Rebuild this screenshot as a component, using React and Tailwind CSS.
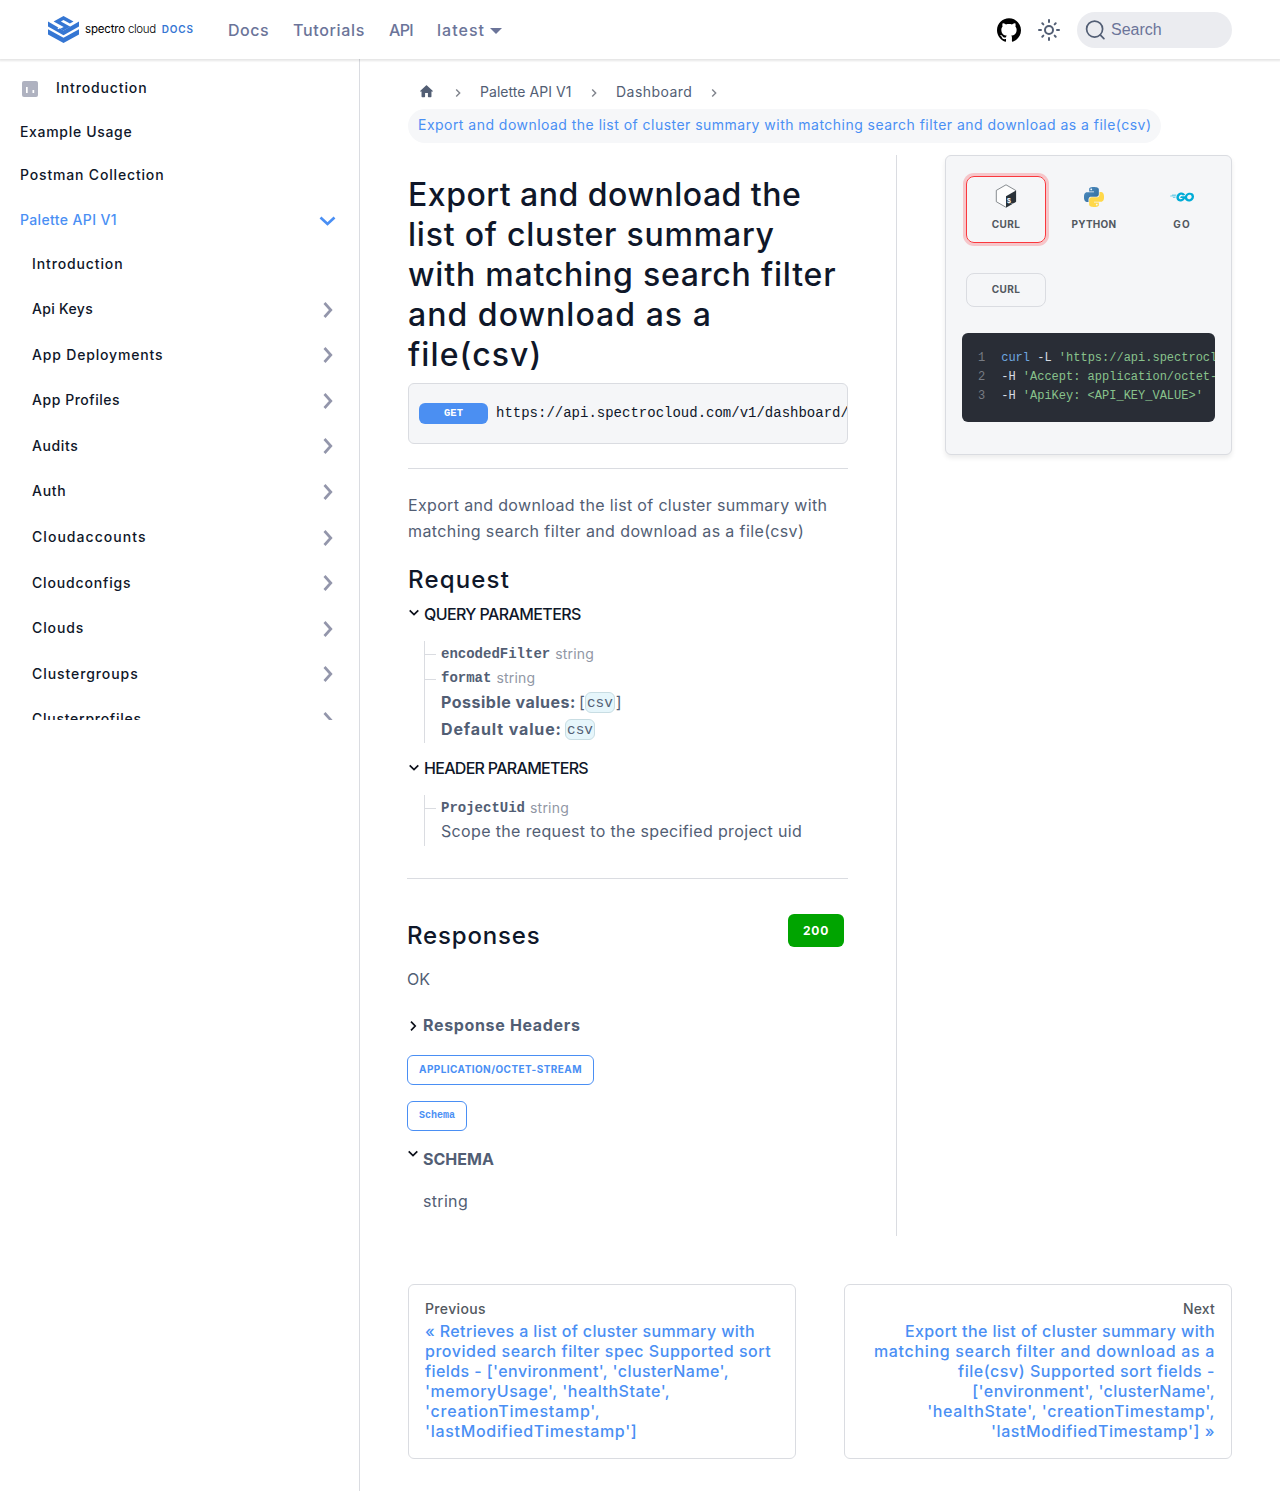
import React from "react";
import { SiGithub, SiGo } from "react-icons/si";

const sidebarTop = [
  { label: "Example Usage", ls: "tracking-[0.68px]" },
  { label: "Postman Collection", ls: "tracking-[0.83px]" },
];

const sidebarGroups = [
  { label: "Api Keys", ls: "tracking-[0.32px]" },
  { label: "App Deployments", ls: "tracking-[0.82px]" },
  { label: "App Profiles", ls: "tracking-[0.54px]" },
  { label: "Audits", ls: "tracking-[0.6px]" },
  { label: "Auth", ls: "tracking-[0.7px]" },
  { label: "Cloudaccounts", ls: "tracking-[1.05px]" },
  { label: "Cloudconfigs", ls: "tracking-[0.84px]" },
  { label: "Clouds", ls: "tracking-[0.9px]" },
  { label: "Clustergroups", ls: "tracking-[0.92px]" },
  { label: "Clusterprofiles", ls: "tracking-[0.74px]" },
];

const previousLines = [
  ["« Retrieves a list of cluster summary with", "tracking-[0.38px]"],
  ["provided search filter spec Supported sort", "tracking-[0.53px]"],
  ["fields - ['environment', 'clusterName',", "tracking-[0.42px]"],
  ["'memoryUsage', 'healthState',", "tracking-[0.53px]"],
  ["'creationTimestamp',", "tracking-[0.78px]"],
  ["'lastModifiedTimestamp']", "tracking-[0.69px]"],
];

const nextLines = [
  ["Export the list of cluster summary with", "tracking-[0.41px]"],
  ["matching search filter and download as a", "tracking-[0.67px]"],
  ["file(csv) Supported sort fields -", "tracking-[0.53px]"],
  ["['environment', 'clusterName',", "tracking-[0.44px]"],
  ["'healthState', 'creationTimestamp',", "tracking-[0.67px]"],
  ["'lastModifiedTimestamp'] »", "tracking-[0.54px]"],
];

function Logo() {
  return (
    <svg width="31" height="27" viewBox="0 0 31 27" fill="#3576d3">
      <path d="M0 5.400L15.500 14.400L31 5.400V10.600L15.500 19.200L0 10.600Z" />
      <path d="M0 13.200L15.500 21.800L31 13.200V18.500L15.500 27L0 18.500Z" />
      <path d="M3.200 5.600L12.500 11L9.800 12.600" fill="none" stroke="#fff" strokeWidth="1.300" />
      <path d="M15.500 0L25.500 5.500L21.900 7.500L15.500 4L12.900 5.500L22.400 10.700L15.500 14.600L12.200 12.800L15.700 10.900L5.600 5.400Z" />
    </svg>
  );
}

function Sun() {
  return (
    <svg width="24" height="24" viewBox="0 0 24 24" fill="none" stroke="#525e74" strokeWidth="2" strokeLinecap="round">
      <circle cx="12" cy="12" r="4" />
      <path d="M12 2v2M12 20v2M2 12h2M20 12h2M5.3 5.3l1.05 1.05M17.65 17.65l1.05 1.05M5.3 18.7l1.05-1.05M17.65 6.35l1.05-1.05" />
    </svg>
  );
}

function RightChevron() {
  return (
    <svg className="mt-px" width="20" height="20" viewBox="0 0 20 20" fill="none" stroke="#9396ab" strokeWidth="2.7">
      <path d="M7.500 3l6.300 7-6.300 7" />
    </svg>
  );
}

function Crumb() {
  return (
    <svg className="mt-0.5" width="8" height="10" viewBox="0 0 8 10" fill="none" stroke="#7f838c" strokeWidth="1.4">
      <path d="M2.200 1.400l3.500 3.600L2.200 8.600" />
    </svg>
  );
}

function Caret({ open }) {
  return open ? (
    <svg width="12" height="12" viewBox="0 0 12 12" fill="none" stroke="#0b0f19" strokeWidth="1.7">
      <path d="M1.700 3.400L6 7.600l4.300-4.200" />
    </svg>
  ) : (
    <svg width="12" height="12" viewBox="0 0 12 12" fill="none" stroke="#0b0f19" strokeWidth="1.7">
      <path d="M4 1.700L8.200 6 4 10.300" />
    </svg>
  );
}

function Bash() {
  return (
    <svg width="22" height="24" viewBox="0 0 22 24">
      <path d="M11 .8l9.700 5.600v11.300L11 23.300 1.300 17.700V6.400z" fill="#fdfdfd" stroke="#6a7075" strokeWidth=".8" />
      <path d="M11 12.200L21 6.400V17.800L11 23.600z" fill="#293138" />
      <text x="11.900" y="19" fontSize="7" fontWeight="700" fill="#fff" fontFamily="Liberation Sans, sans-serif">$_</text>
    </svg>
  );
}

const snake =
  "M14.25.18l.9.2.73.26.59.3.45.32.34.34.25.34.16.33.1.3.04.26.02.2-.01.13V8.5l-.05.63-.13.55-.21.46-.26.38-.3.31-.33.25-.35.19-.35.14-.33.1-.3.07-.26.04-.21.02H8.77l-.69.05-.59.14-.5.22-.41.27-.33.32-.27.35-.2.36-.15.37-.1.35-.07.32-.04.27-.02.21v3.06H3.17l-.21-.03-.28-.07-.32-.12-.35-.18-.36-.26-.36-.36-.35-.46-.32-.59-.28-.73-.21-.88-.14-1.05-.05-1.23.06-1.22.16-1.04.24-.87.32-.71.36-.57.4-.44.42-.33.42-.24.4-.16.36-.1.32-.05.24-.01h.16l.06.01h8.16v-.83H6.18l-.01-2.75-.02-.37.05-.34.11-.31.17-.28.25-.26.31-.23.38-.2.44-.18.51-.15.58-.12.64-.1.71-.06.77-.04.84-.02 1.27.05zm-6.3 1.98l-.23.33-.08.41.08.41.23.34.33.22.41.09.41-.09.33-.22.23-.34.08-.41-.08-.41-.23-.33-.33-.22-.41-.09-.41.09z";

function Python() {
  return (
    <svg width="20" height="20" viewBox="0 0 24 24">
      <defs>
        <linearGradient id="pyBlue" x1="0" y1="0" x2="1" y2="1">
          <stop offset="0" stopColor="#4f8fc4" />
          <stop offset="1" stopColor="#306998" />
        </linearGradient>
      </defs>
      <path d={snake} fill="url(#pyBlue)" />
      <path d={snake} fill="#ffd84a" transform="rotate(180 12 12)" />
    </svg>
  );
}

function Header() {
  return (
    <header className="relative z-10 flex h-[59px] items-center bg-white px-12 shadow-[0_1px_2px_1px_rgba(0,0,0,0.1)]">
      <a className="flex w-[180px] items-center">
        <Logo />
        <span className="-mt-[2px] ml-[6px] flex items-center text-[11.5px] leading-4 text-black">
          <span className="tracking-[-0.18px]">spectro</span>
          <span className="ml-[3px] font-light tracking-[-0.35px]">cloud</span>
          <span className="ml-[6px] text-[10px] font-semibold tracking-[0.8px] text-[#3576d3]">DOCS</span>
        </span>
      </a>
      <nav className="flex items-center font-medium text-[#6b7499]">
        <a className="w-[65px] tracking-[0.48px]">Docs</a>
        <a className="w-[96px] tracking-[0.67px]">Tutorials</a>
        <a className="w-[48px] tracking-[-0.66px]">API</a>
        <a className="flex items-center tracking-[1.02px]">
          latest
          <span className="ml-[5px] mt-[2px] border-x-[6px] border-t-[6px] border-x-transparent border-t-[#6b7499]" />
        </a>
      </nav>
      <div className="ml-auto flex items-center">
        <SiGithub size={24} color="#000" />
        <span className="ml-4 mr-4">
          <Sun />
        </span>
        <button className="flex h-9 w-[155px] items-center rounded-full bg-[#ebecf0] pl-2 font-['Liberation_Sans',sans-serif] text-base text-[#6b7499]">
          <svg width="20" height="20" viewBox="0 0 20 20" fill="none" stroke="#525e74" strokeWidth="1.7">
            <circle cx="9.600" cy="9.100" r="8" />
            <path d="M15.200 14.800l3.700 3.800" strokeLinecap="round" />
          </svg>
          <span className="ml-[6px]">Search</span>
        </button>
      </div>
    </header>
  );
}

function Sidebar() {
  return (
    <aside className="w-[360px] shrink-0 border-r border-[#dadce1]">
      <div className="h-[661px] overflow-hidden pl-5 pr-[22px] pt-[7.3px] text-sm font-medium text-[#0f1729]">
        <div className="flex h-[43.6px] items-center">
          <svg className="ml-[2px] mt-[2px]" width="16" height="16" viewBox="0 0 16 16">
            <rect width="16" height="16" rx="2" fill="#afb2c0" />
            <path d="M4 6h1.700v6H4zM10.500 9h1.700v3h-1.700z" fill="#fff" />
          </svg>
          <span className="ml-[18px] tracking-[0.88px]">Introduction</span>
        </div>
        {sidebarTop.map((item) => (
          <div key={item.label} className="flex h-[43.6px] items-center">
            <span className={item.ls}>{item.label}</span>
          </div>
        ))}
        <div className="flex h-[45.6px] items-center justify-between text-[#4a8ff4]">
          <span className="tracking-[0.37px]">Palette API V1</span>
          <svg className="mt-[2px]" width="20" height="20" viewBox="0 0 20 20" fill="none" stroke="#4a8ff4" strokeWidth="2.7">
            <path d="M3.500 6.500l7 6.400 7-6.400" />
          </svg>
        </div>
        <div className="flex h-[43.6px] items-center pl-3">
          <span className="tracking-[0.88px]">Introduction</span>
        </div>
        {sidebarGroups.map((item) => (
          <div key={item.label} className="flex h-[45.6px] items-center justify-between pl-3">
            <span className={item.ls}>{item.label}</span>
            <RightChevron />
          </div>
        ))}
      </div>
    </aside>
  );
}

function Breadcrumbs() {
  return (
    <nav className="text-sm text-[#525e74]">
      <div className="flex h-[34px] items-center">
        <svg className="ml-[10px] mt-[-2px]" width="17" height="17" viewBox="0 0 24 24" fill="#525e74">
          <path d="M10 19v-5h4v5c0 .55.45 1 1 1h3c.55 0 1-.45 1-1v-7h1.700c.46 0 .68-.57.33-.87L12.670 3.600c-.38-.34-.96-.34-1.340 0l-8.360 7.530c-.34.3-.13.87.33.87H5v7c0 .55.45 1 1 1h3c.55 0 1-.45 1-1z" />
        </svg>
        <span className="w-[45px] pl-[19px]"><Crumb /></span>
        <span className="w-[110px] tracking-[0.05px]">Palette API V1</span>
        <span className="w-[26px]"><Crumb /></span>
        <span className="w-[94px] tracking-[0.46px]">Dashboard</span>
        <Crumb />
      </div>
      <div className="flex h-[34px] w-[753px] items-center whitespace-nowrap rounded-full bg-[#f6f7f9] pb-[2px] pl-[10px] tracking-[0.47px] text-[#4a8ff4]">
        Export and download the list of cluster summary with matching search filter and download as a file(csv)
      </div>
    </nav>
  );
}

function Param({ name, tick }) {
  return (
    <div className="flex h-6 items-center pt-px text-sm">
      <span className={tick} />
      <code className="font-['Liberation_Mono',monospace] font-bold">{name}</code>
      <span className="ml-[5px] tracking-[0.2px] text-[#9197a5]">string</span>
    </div>
  );
}

function Csv() {
  return (
    <code className="mt-px inline-flex h-[21px] w-[30px] items-center justify-center rounded-md border border-[#c8dde3] bg-[#e6f6fb] pt-[2px] font-['Liberation_Mono',monospace] text-[14.4px]">
      csv
    </code>
  );
}

function Article() {
  return (
    <article className="w-[440px] text-[#525e74]">
      <h1 className="whitespace-nowrap pt-5 text-[32px] font-medium leading-10 text-[#0f1729]">
        <span className="block tracking-[0.5px]">Export and download the</span>
        <span className="block tracking-[0.78px]">list of cluster summary</span>
        <span className="block tracking-[0.79px]">with matching search filter</span>
        <span className="block tracking-[1.03px]">and download as a</span>
        <span className="block tracking-[1.1px]">file(csv)</span>
      </h1>
      <div className="mt-2 flex h-[61px] items-center overflow-hidden rounded-md border border-[#dadce1] bg-[#f5f6f8] pl-[10px] font-['Liberation_Mono',monospace]">
        <span className="flex h-[21px] w-[69px] shrink-0 items-center justify-center rounded-md bg-[#4b8ff2] text-[10.5px] font-bold text-white">GET</span>
        <span className="ml-2 pb-px text-sm text-[#0f1729]">https://api.spectrocloud.com/v1/dashboard/</span>
      </div>
      <hr className="mt-6 border-[#dadce1]" />
      <p className="mt-[23px] whitespace-nowrap leading-[26px]">
        <span className="block tracking-[0.34px]">Export and download the list of cluster summary with</span>
        <span className="block tracking-[0.39px]">matching search filter and download as a file(csv)</span>
      </p>
      <h2 className="mt-[21px] text-2xl font-medium leading-[30px] tracking-[1.17px] text-[#0f1729]">Request</h2>
      <div className="mt-[6px] flex h-6 items-center font-medium text-[#0f1729]">
        <Caret open />
        <span className="ml-1 pt-px tracking-[-0.6px]">QUERY PARAMETERS</span>
      </div>
      <div className="ml-4 mt-[16px] h-[102px] border-l border-[#dadce1]">
        <Param name="encodedFilter" tick="mr-[5px] mt-[2px] h-px w-[11px] bg-[#dadce1]" />
        <Param name="format" tick="mr-[5px] mt-[4px] h-px w-[11px] bg-[#dadce1]" />
        <div className="ml-4 flex h-[27px] items-center pb-px">
          <b className="w-[138px] tracking-[0.5px]">Possible values:</b>
          <span className="pb-px">[</span><Csv /><span className="pb-px pl-px">]</span>
        </div>
        <div className="ml-4 flex h-[27px] items-center pb-px">
          <b className="w-[124px] tracking-[0.88px]">Default value:</b>
          <Csv />
        </div>
      </div>
      <div className="mt-[13px] flex h-6 items-center font-medium text-[#0f1729]">
        <span className="-mt-px"><Caret open /></span>
        <span className="ml-1 tracking-[-0.7px]">HEADER PARAMETERS</span>
      </div>
      <div className="ml-4 mt-[15px] h-[51px] border-l border-[#dadce1]">
        <Param name="ProjectUid" tick="mr-[5px] mt-[2px] h-px w-[11px] bg-[#dadce1]" />
        <div className="ml-4 flex h-[26px] items-center whitespace-nowrap pb-[2px] tracking-[0.35px]">Scope the request to the specified project uid</div>
      </div>
      <div className="-ml-px mt-8 border-t border-[#dadce1] pt-[35px]">
        <div className="flex h-[42px] items-start justify-between pr-1">
          <h2 className="mt-[7px] text-2xl font-medium leading-[30px] tracking-[0.84px] text-[#0f1729]">Responses</h2>
          <span className="flex h-[33px] w-14 items-center justify-center rounded-md bg-[#00a400] text-xs font-bold tracking-[0.75px] text-white">200</span>
        </div>
        <p className="mt-[10px] leading-[26px]">OK</p>
        <div className="mt-[21px] flex h-[26px] items-center">
          <Caret />
          <b className="ml-1 pb-[2px] tracking-[0.66px]">Response Headers</b>
        </div>
        <div className="mt-[16px] flex h-[30px] w-[187px] items-center justify-center whitespace-nowrap rounded-md border border-[#4a8ff4] pb-[2px] text-[10px] font-bold tracking-[0.43px] text-[#4a8ff4]">APPLICATION/OCTET-STREAM</div>
        <div className="mt-4 flex h-[30px] w-[60px] items-center justify-center rounded-md border border-[#4a8ff4] pb-[2px] font-['Liberation_Mono',monospace] text-[10px] font-bold text-[#4a8ff4]">Schema</div>
        <div className="mt-[15px] flex h-[26px] items-center">
          <span className="-mt-[10px]"><Caret open /></span>
          <b className="ml-1">SCHEMA</b>
        </div>
        <div className="mt-4 pl-4 leading-[26px] tracking-[0.32px]">string</div>
      </div>
    </article>
  );
}

function CodePanel() {
  const label = "text-[10px] font-bold leading-3";
  return (
    <div className="h-[300px] w-[287px] rounded-md border border-[#dadce1] bg-[#f5f6f8] p-4 pt-5 text-[#525860] shadow-[0_3px_5px_rgba(0,0,0,0.08)]">
      <div className="flex gap-2 pl-1">
        <div className="flex h-[67px] w-20 shrink-0 flex-col items-center rounded-lg border border-[#fa383e] pt-[7px] shadow-[0_0_0_3px_rgba(250,56,62,0.25)]">
          <Bash />
          <span className={`${label} mt-[10px] tracking-[0.45px]`}>CURL</span>
        </div>
        <div className="flex h-[67px] w-20 shrink-0 flex-col items-center pt-[11px]">
          <Python />
          <span className={`${label} mt-[11px] tracking-[0.27px]`}>PYTHON</span>
        </div>
        <div className="flex h-[67px] w-20 shrink-0 flex-col items-center pt-[9px]">
          <SiGo size={24} color="#00acd7" />
          <span className={`${label} mt-[9px] tracking-[1.1px]`}>GO</span>
        </div>
      </div>
      <div className="ml-1 mt-[30px] flex h-[34px] w-20 items-center justify-center rounded-lg border border-[#dadce1] pb-[2px]">
        <span className={`${label} tracking-[0.45px]`}>CURL</span>
      </div>
      <pre className="mt-[26px] h-[89px] overflow-hidden rounded-md bg-[#292d36] pl-4 pt-4 font-['Liberation_Mono',monospace] text-xs leading-[19px] text-[#d6dbe4]">
        <div><span className="mr-4 text-[#777b83]">1</span><span className="text-[#6fa8e0]">curl</span> -L <span className="text-[#88c28c]">'https://api.spectrocl</span></div>
        <div><span className="mr-4 text-[#777b83]">2</span>-H <span className="text-[#88c28c]">'Accept: application/octet-</span></div>
        <div><span className="mr-4 text-[#777b83]">3</span>-H <span className="text-[#88c28c]">'ApiKey: &lt;API_KEY_VALUE&gt;'</span></div>
      </pre>
    </div>
  );
}

function Pager() {
  const card = "h-[175px] flex-1 rounded-md border border-[#dadce1] px-4 pt-[13px] font-medium";
  return (
    <nav className="mt-12 flex gap-12">
      <div className={card}>
        <div className="mb-px text-sm leading-[22px] tracking-[0.36px] text-[#525860]">Previous</div>
        <div className="leading-5 text-[#4a8ff4]">
          {previousLines.map(([text, ls]) => (
            <div key={text} className={`whitespace-nowrap ${ls}`}>{text}</div>
          ))}
        </div>
      </div>
      <div className={`${card} text-right`}>
        <div className="mb-px text-sm leading-[22px] tracking-[0.17px] text-[#525860]">Next</div>
        <div className="leading-5 text-[#4a8ff4]">
          {nextLines.map(([text, ls]) => (
            <div key={text} className={`whitespace-nowrap ${ls}`}>{text}</div>
          ))}
        </div>
      </div>
    </nav>
  );
}

export default function App() {
  return (
    <div className="min-h-[1491px] w-[1280px] bg-white font-['Inter',sans-serif]">
      <Header />
      <div className="flex min-h-[1432px]">
        <Sidebar />
        <main className="w-[920px] px-12 pt-4">
          <Breadcrumbs />
          <div className="mt-3 flex h-[1081px]">
            <Article />
            <div className="ml-12 mr-12 w-px bg-[#dadce1]" />
            <CodePanel />
          </div>
          <Pager />
        </main>
      </div>
    </div>
  );
}
